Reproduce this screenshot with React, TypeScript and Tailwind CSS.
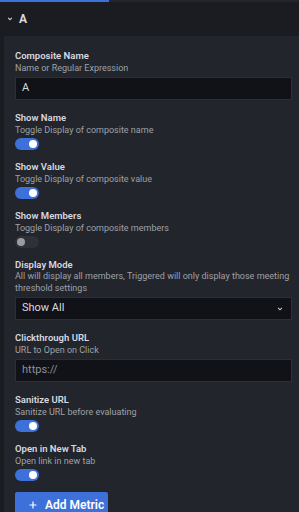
import React from 'react';

const Toggle = ({ on }: { on: boolean }) => (
  <div
    className={`mt-[2px] w-[24px] h-[12px] rounded-full flex items-center px-[2px] ${
      on ? 'bg-[#3d71d9] justify-end' : 'bg-[#2e3137] justify-start'
    }`}
  >
    <div className={`w-[8px] h-[8px] rounded-full ${on ? 'bg-white' : 'bg-[#9a9ca3]'}`} />
  </div>
);

const Field = ({
  label,
  desc,
  children,
}: {
  label: string;
  desc: string;
  children: React.ReactNode;
}) => (
  <div className="mb-[11px]">
    <div className="text-[9.5px] leading-[12px] font-semibold text-[#d8d9e0]">{label}</div>
    <div className="text-[9px] leading-[12px] text-[#9fa1a8]">{desc}</div>
    {children}
  </div>
);

const App: React.FC = () => {
  return (
    <div className="w-[299px] h-[512px] overflow-hidden bg-[#1a1c21] font-['Roboto','Liberation_Sans',sans-serif]">
      {/* tab underline */}
      <div className="h-[2px] flex bg-[#22252b]">
        <div className="w-[109px] bg-[#3d71d9]" />
      </div>

      {/* header */}
      <div className="h-[34px] flex items-center pl-[7px] gap-[6px]">
        <svg className="w-[6px] h-[6px]" viewBox="0 0 8 8" fill="none" stroke="#c7c8d0" strokeWidth={1.6}>
          <path d="M1.5 2.5 L4 5 L6.5 2.5" />
        </svg>
        <span className="text-[12px] font-bold text-[#d8d9e0]">A</span>
      </div>

      {/* panel */}
      <div className="ml-[4px] bg-[#22252b] pl-[11px] pr-[7px] pt-[14px] h-[476px]">
        <div className="mb-[12px]">
          <div className="text-[9.5px] leading-[12px] font-semibold text-[#d8d9e0]">Composite Name</div>
          <div className="text-[9px] leading-[12px] text-[#9fa1a8]">Name or Regular Expression</div>
          <div className="mt-[3px] h-[23px] bg-[#111217] border border-[#2c3036] flex items-center px-[6px] text-[11px] text-[#d8d9e0]">
            A
          </div>
        </div>

        <Field label="Show Name" desc="Toggle Display of composite name">
          <Toggle on />
        </Field>
        <Field label="Show Value" desc="Toggle Display of composite value">
          <Toggle on />
        </Field>
        <Field label="Show Members" desc="Toggle Display of composite members">
          <Toggle on={false} />
        </Field>

        <div className="mb-[12px]">
          <div className="text-[9.5px] leading-[12px] font-semibold text-[#d8d9e0]">Display Mode</div>
          <div className="text-[9px] leading-[11.5px] text-[#9fa1a8]">
            All will display all members, Triggered will only display those meeting threshold settings
          </div>
          <div className="mt-[3px] h-[23px] bg-[#111217] border border-[#2c3036] flex items-center justify-between pl-[6px] pr-[8px] text-[11px] text-[#d8d9e0]">
            <span>Show All</span>
            <svg className="w-[6px] h-[6px]" viewBox="0 0 8 8" fill="none" stroke="#c7c8d0" strokeWidth={1.4}>
              <path d="M1.5 2.5 L4 5 L6.5 2.5" />
            </svg>
          </div>
        </div>

        <div className="mb-[12px]">
          <div className="text-[9.5px] leading-[12px] font-semibold text-[#d8d9e0]">Clickthrough URL</div>
          <div className="text-[9px] leading-[12px] text-[#9fa1a8]">URL to Open on Click</div>
          <div className="mt-[3px] h-[23px] bg-[#111217] border border-[#2c3036] flex items-center px-[6px] text-[11px] text-[#8e9099]">
            https://
          </div>
        </div>

        <Field label="Sanitize URL" desc="Sanitize URL before evaluating">
          <Toggle on />
        </Field>
        <Field label="Open in New Tab" desc="Open link in new tab">
          <Toggle on />
        </Field>

        <button className="mt-[2px] h-[26px] w-[93px] bg-[#3d71d9] rounded-[2px] flex items-center gap-[8px] pl-[14px] text-[12px] font-semibold text-white">
          <svg className="w-[8px] h-[8px]" viewBox="0 0 8 8" stroke="white" strokeWidth={1.2}>
            <path d="M4 0.5 V7.5 M0.5 4 H7.5" />
          </svg>
          Add Metric
        </button>
      </div>
    </div>
  );
};

export default App;
